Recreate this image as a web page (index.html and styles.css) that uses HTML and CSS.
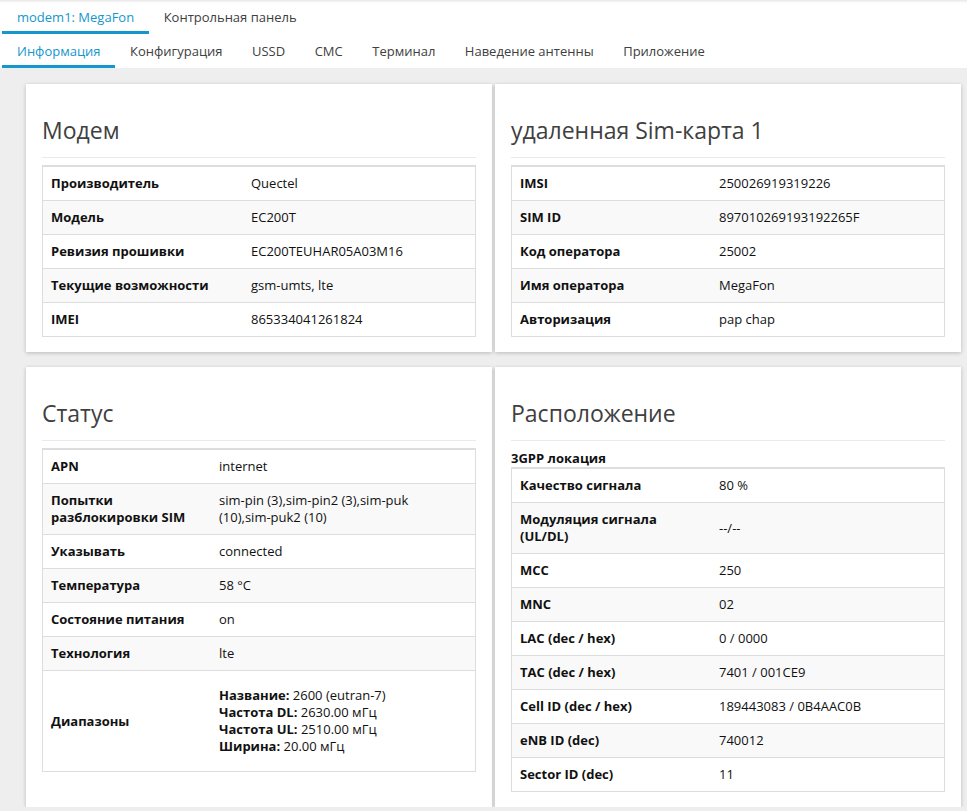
FILE: index.html
```html
<!DOCTYPE html>
<html lang="ru">
<head>
<meta charset="utf-8">
<title>modem1: MegaFon</title>
<link rel="stylesheet" href="styles.css">
</head>
<body>
<header class="header">
  <nav class="tabs">
    <a class="tab active">modem1: MegaFon</a>
    <a class="tab">Контрольная панель</a>
  </nav>
  <nav class="tabs">
    <a class="tab active">Информация</a>
    <a class="tab">Конфигурация</a>
    <a class="tab">USSD</a>
    <a class="tab">СМС</a>
    <a class="tab">Терминал</a>
    <a class="tab">Наведение антенны</a>
    <a class="tab">Приложение</a>
  </nav>
</header>
<main class="grid">
  <section class="card">
    <h2 class="card-title">Модем</h2>
    <div class="card-body">
      <table class="info t-modem">
        <tr><th>Производитель</th><td>Quectel</td></tr>
        <tr><th>Модель</th><td>EC200T</td></tr>
        <tr><th>Ревизия прошивки</th><td>EC200TEUHAR05A03M16</td></tr>
        <tr><th>Текущие возможности</th><td>gsm-umts, lte</td></tr>
        <tr><th>IMEI</th><td>865334041261824</td></tr>
      </table>
    </div>
  </section>
  <section class="card">
    <h2 class="card-title">удаленная Sim-карта 1</h2>
    <div class="card-body">
      <table class="info t-wide">
        <tr><th>IMSI</th><td>250026919319226</td></tr>
        <tr><th>SIM ID</th><td>897010269193192265F</td></tr>
        <tr><th>Код оператора</th><td>25002</td></tr>
        <tr><th>Имя оператора</th><td>MegaFon</td></tr>
        <tr><th>Авторизация</th><td>pap chap</td></tr>
      </table>
    </div>
  </section>
  <section class="card">
    <h2 class="card-title">Статус</h2>
    <div class="card-body">
      <table class="info t-status">
        <tr><th>APN</th><td>internet</td></tr>
        <tr><th>Попытки разблокировки SIM</th><td><span class="narrow">sim-pin (3),sim-pin2 (3),sim-puk (10),sim-puk2 (10)</span></td></tr>
        <tr><th>Указывать</th><td>connected</td></tr>
        <tr><th>Температура</th><td>58 °C</td></tr>
        <tr><th>Состояние питания</th><td>on</td></tr>
        <tr><th>Технология</th><td>lte</td></tr>
        <tr><th>Диапазоны</th><td><div class="bands">
          <div><b>Название:</b> 2600 (eutran-7)</div>
          <div><b>Частота DL:</b> 2630.00 мГц</div>
          <div><b>Частота UL:</b> 2510.00 мГц</div>
          <div><b>Ширина:</b> 20.00 мГц</div>
        </div></td></tr>
      </table>
    </div>
  </section>
  <section class="card">
    <h2 class="card-title">Расположение</h2>
    <div class="card-body">
      <div class="caption">3GPP локация</div>
      <table class="info t-wide">
        <tr><th>Качество сигнала</th><td>80 %</td></tr>
        <tr><th>Модуляция сигнала (UL/DL)</th><td>--/--</td></tr>
        <tr><th>MCC</th><td>250</td></tr>
        <tr><th>MNC</th><td>02</td></tr>
        <tr><th>LAC (dec / hex)</th><td>0 / 0000</td></tr>
        <tr><th>TAC (dec / hex)</th><td>7401 / 001CE9</td></tr>
        <tr><th>Cell ID (dec / hex)</th><td>189443083 / 0B4AAC0B</td></tr>
        <tr><th>eNB ID (dec)</th><td>740012</td></tr>
        <tr><th>Sector ID (dec)</th><td>11</td></tr>
      </table>
    </div>
  </section>
</main>
</body>
</html>
```
FILE: styles.css
```css
html, body {
  margin: 0;
  padding: 0;
}
body {
  background: #eeeeee;
  font-family: "Open Sans", "Noto Sans", sans-serif;
  font-size: 13px;
  color: #222;
  overflow: hidden;
}
.header {
  background: #fff;
  box-shadow: inset 0 3px 3px -2px rgba(0,0,0,0.12);
}
.tabs {
  display: flex;
  padding-left: 2px;
  height: 34px;
}
.tab {
  display: flex;
  align-items: center;
  padding: 0 14.5px 0 15px;
  color: #404040;
  font-size: 13px;
  border-bottom: 3px solid transparent;
  box-sizing: border-box;
  height: 34px;
  padding-top: 3px;
}
.tab.active {
  color: #1497cc;
  border-bottom-color: #1497cc;
}
.grid {
  display: grid;
  grid-template-columns: 466px 466px;
  column-gap: 3px;
  row-gap: 15px;
  padding: 16px 0 0 26px;
}
.card {
  background: #fff;
  box-shadow: 0 1px 4px rgba(0,0,0,0.22);
  padding: 28px 16px 15px;
}
.card-title {
  margin: 0;
  font-weight: 400;
  font-size: 23px;
  line-height: 36px;
  color: #404040;
  padding-bottom: 9px;
  border-bottom: 1px solid #eaeaea;
}
.card-body {
  margin-top: 7px;
}
.caption {
  font-weight: 700;
  line-height: 17px;
  color: #111;
  padding-top: 2px;
}
.info {
  width: 100%;
  border-collapse: collapse;
  border: 1px solid #ddd;
  border-top: 2px solid #ddd;
  color: #111;
}
.info th, .info td {
  text-align: left;
  vertical-align: middle;
  padding: 8px 8px;
  line-height: 17px;
  border-top: 1px solid #ddd;
}
.info th {
  font-weight: 700;
}
.info tr:nth-child(even) {
  background: #f9f9f9;
}
.t-modem th { width: 184px; }
.t-wide th { width: 183px; }
.t-status th { width: 152px; }
.narrow {
  display: inline-block;
  max-width: 205px;
}
.bands {
  padding: 8px 0;
}
```
